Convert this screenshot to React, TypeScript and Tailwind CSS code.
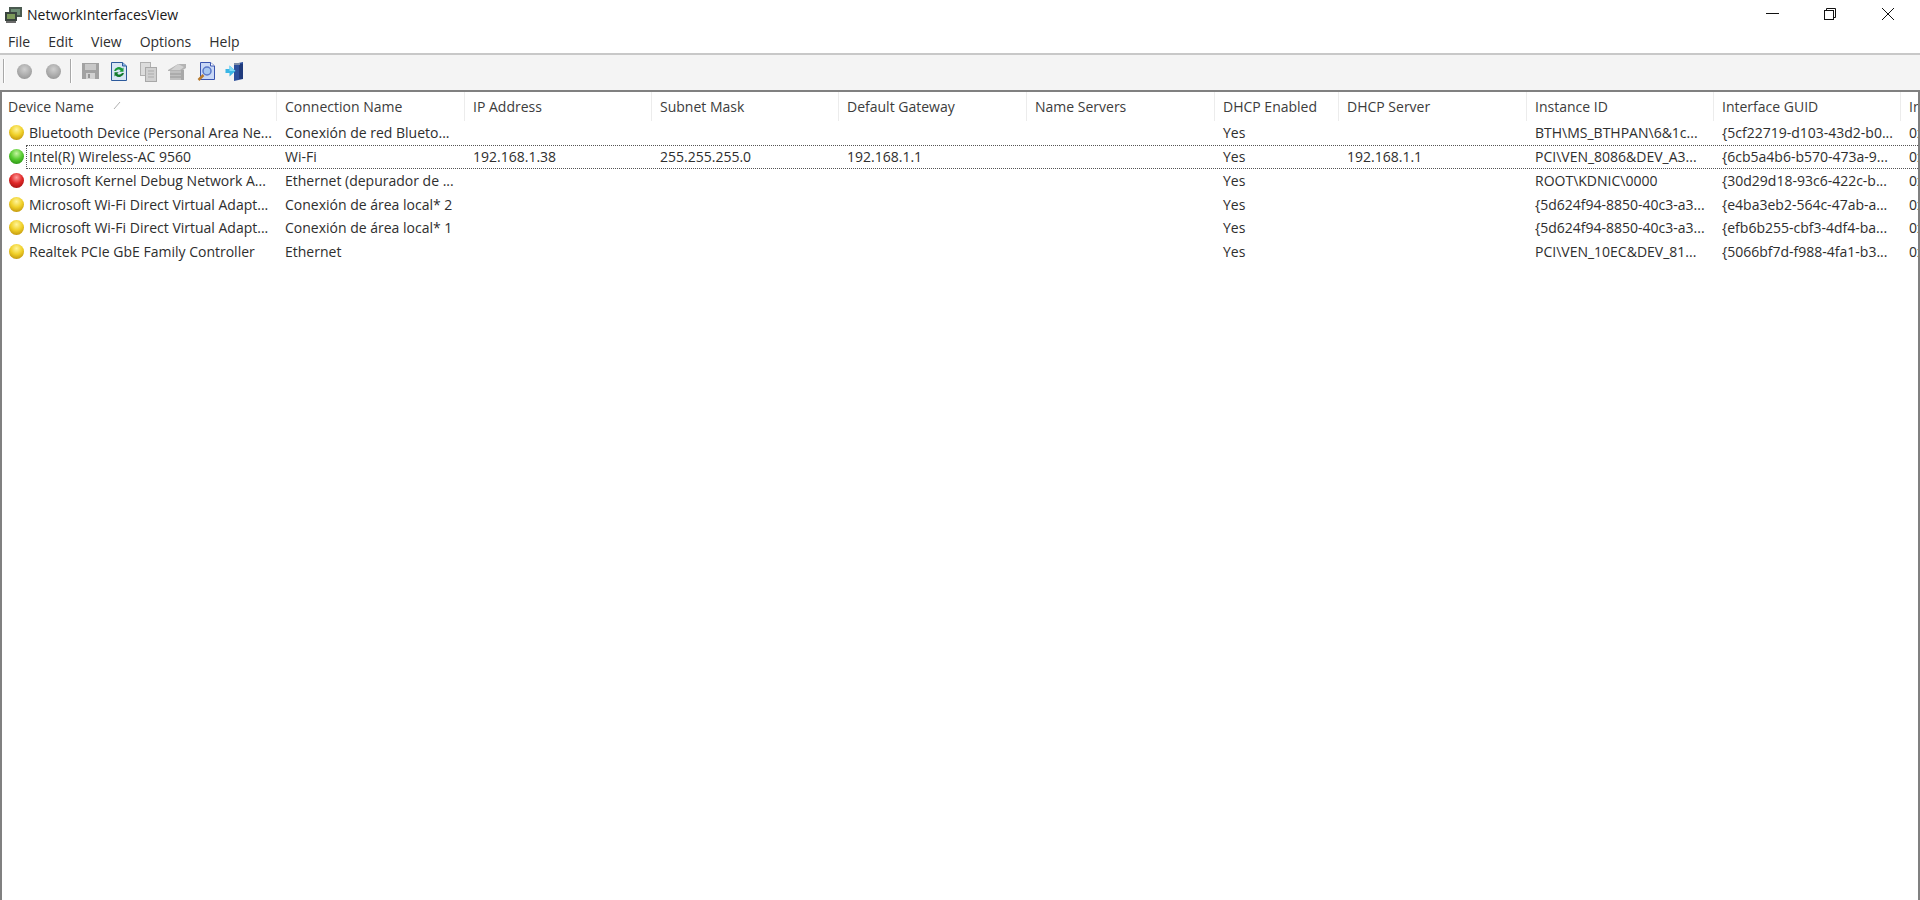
import React from 'react';

const columns = [
    'Device Name',
    'Connection Name',
    'IP Address',
    'Subnet Mask',
    'Default Gateway',
    'Name Servers',
    'DHCP Enabled',
    'DHCP Server',
    'Instance ID',
    'Interface GUID',
    'Interface Index',
];

const widths = 'grid grid-cols-[277px_188px_187px_187px_188px_188px_124px_188px_187px_187px_187px] w-max';

const rows = [
    { status: 'yellow', cells: ['Bluetooth Device (Personal Area Ne...', 'Conexión de red Blueto...', '', '', '', '', 'Yes', '', 'BTH\\MS_BTHPAN\\6&1c...', '{5cf22719-d103-43d2-b0...', '0x00'] },
    { status: 'green', cells: ['Intel(R) Wireless-AC 9560', 'Wi-Fi', '192.168.1.38', '255.255.255.0', '192.168.1.1', '', 'Yes', '192.168.1.1', 'PCI\\VEN_8086&DEV_A3...', '{6cb5a4b6-b570-473a-9...', '0x00'] },
    { status: 'red', cells: ['Microsoft Kernel Debug Network A...', 'Ethernet (depurador de ...', '', '', '', '', 'Yes', '', 'ROOT\\KDNIC\\0000', '{30d29d18-93c6-422c-b...', '0x00'] },
    { status: 'yellow', cells: ['Microsoft Wi-Fi Direct Virtual Adapt...', 'Conexión de área local* 2', '', '', '', '', 'Yes', '', '{5d624f94-8850-40c3-a3...', '{e4ba3eb2-564c-47ab-a...', '0x00'] },
    { status: 'yellow', cells: ['Microsoft Wi-Fi Direct Virtual Adapt...', 'Conexión de área local* 1', '', '', '', '', 'Yes', '', '{5d624f94-8850-40c3-a3...', '{efb6b255-cbf3-4df4-ba...', '0x00'] },
    { status: 'yellow', cells: ['Realtek PCIe GbE Family Controller', 'Ethernet', '', '', '', '', 'Yes', '', 'PCI\\VEN_10EC&DEV_81...', '{5066bf7d-f988-4fa1-b3...', '0x00'] },
];

const ballColors: Record<string, string> = {
    yellow: 'bg-[radial-gradient(circle_at_50%_30%,#fff59a_0%,#f0d028_45%,#c69c10_80%,#7c6a10_100%)]',
    green: 'bg-[radial-gradient(circle_at_50%_30%,#c4f5a0_0%,#58cc30_45%,#2f9a18_80%,#2c6c20_100%)]',
    red: 'bg-[radial-gradient(circle_at_50%_30%,#ff9c9c_0%,#e02828_45%,#ac1414_80%,#701414_100%)]',
};

const GrayBall = () => (
    <div className="w-[15px] h-[15px] rounded-full bg-[radial-gradient(circle_at_50%_35%,#cfcfcf_0%,#a6a6a6_60%,#8a8a8a_100%)]" />
);

const AppIcon = () => (
    <svg width="20" height="20" viewBox="0 0 20 20">
        <rect x="6" y="1" width="13" height="10" fill="#4a5a50" />
        <rect x="8" y="3" width="9" height="6" fill="#6f8f76" />
        <rect x="2" y="6" width="12" height="9" fill="#39443e" />
        <rect x="4" y="8" width="8" height="5" fill="#7c9a5a" />
        <rect x="3" y="15" width="10" height="2" fill="#6b6b6b" />
    </svg>
);

const SaveIcon = () => (
    <svg width="19" height="18" viewBox="0 0 19 18">
        <rect x="1" y="1" width="17" height="16" fill="#a2a2a2" />
        <rect x="4" y="2" width="11" height="6" fill="#c8c8c8" />
        <rect x="5" y="11" width="9" height="6" fill="#d2d2d2" />
        <rect x="7" y="12" width="2" height="4" fill="#969696" />
    </svg>
);

const RefreshIcon = () => (
    <svg width="18" height="21" viewBox="0 0 18 21">
        <path d="M1.5 1.5H12.5L16.5 5V19.5H1.5Z" fill="#d8e6f4" stroke="#2c5a9c" />
        <path d="M12.5 1.5V5H16.5" fill="#8fb8e4" stroke="#2c5a9c" />
        <path d="M4 10a5 5 0 0 1 8.5-2.5l1-1v4.2H9.3l1.4-1.4A3 3 0 0 0 6 10Z" fill="#1a9a3a" />
        <path d="M14 12a5 5 0 0 1-8.5 2.5l-1 1v-4.2h4.2l-1.4 1.4A3 3 0 0 0 12 12Z" fill="#127a2c" />
    </svg>
);

const CopyIcon = () => (
    <svg width="19" height="21" viewBox="0 0 19 21">
        <rect x="1.5" y="1.5" width="10" height="13" fill="#dcdcdc" stroke="#b0b0b0" />
        <rect x="6.5" y="6.5" width="11" height="14" fill="#d0d0d0" stroke="#a8a8a8" />
        <path d="M9 10h6M9 13h6M9 16h6" stroke="#ababab" />
    </svg>
);

const PropertiesIcon = () => (
    <svg width="21" height="19" viewBox="0 0 21 19">
        <path d="M1 8L11 2h8v4l-3 2v1H1Z" fill="#b4b4b4" />
        <path d="M11 2l6 3-4 3H4Z" fill="#d2d2d2" />
        <rect x="3" y="9" width="11" height="9" fill="#c0c0c0" />
        <path d="M3 12h11M3 15h11" stroke="#989898" />
        <rect x="14" y="8" width="3" height="10" fill="#a8a8a8" />
    </svg>
);

const ReportIcon = () => (
    <svg width="19" height="21" viewBox="0 0 19 21">
        <path d="M3.5 1.5H13.5L17.5 5V18.5H3.5Z" fill="#c9d8f6" stroke="#3a55b0" />
        <path d="M13.5 1.5V5H17.5" fill="#ffffff" stroke="#3a55b0" />
        <circle cx="10" cy="10" r="4" fill="#a9c8f0" stroke="#5a78c8" strokeWidth="1.5" />
        <path d="M6.5 14L1.5 19" stroke="#b87a2c" strokeWidth="2.5" />
    </svg>
);

const ExitIcon = () => (
    <svg width="20" height="21" viewBox="0 0 20 21">
        <path d="M9 3L18 1V18L9 20Z" fill="#2c4f9c" />
        <path d="M14 3h4v15h-4Z" fill="#1f3a7c" />
        <path d="M9 2h6v2H9Z" fill="#7c8ca8" />
        <path d="M0.5 8h4V4.5L10.5 10 4.5 15.5V12h-4Z" fill="#39b6e6" />
        <path d="M4.5 4.5L10.5 10H4.5Z" fill="#82dcf6" />
    </svg>
);

const ToolbarSep = () => <div className="w-[2px] h-[24px] bg-[#a8a8a8] border-r border-white" />;

const ToolSlot = ({ children }: { children: React.ReactNode }) => (
    <div className="w-[29px] flex items-center justify-center">{children}</div>
);

const App = () => {
    return (
        <div className="h-[900px] w-[1920px] bg-white flex flex-col overflow-hidden font-['Open_Sans','Noto_Sans',sans-serif] text-[14px] text-[#2e2e2e]">
            {/* Title bar */}
            <div className="h-[30px] flex items-center bg-white">
                <div className="w-[27px] pl-[3px] pt-[2px]">
                    <AppIcon />
                </div>
                <span className="text-[14px] text-[#1a1a1a] pb-[2px]">NetworkInterfacesView</span>
                <div className="ml-auto flex items-center text-black pr-[3px] pb-[2px]">
                    <div className="w-[58px] h-[28px] flex items-center justify-center">
                        <svg width="13" height="12" viewBox="0 0 13 12"><path d="M0 5.5H13" stroke="#111" /></svg>
                    </div>
                    <div className="w-[58px] h-[28px] flex items-center justify-center">
                        <svg width="12" height="12" viewBox="0 0 12 12" fill="none" stroke="#111"><rect x="0.5" y="2.5" width="9" height="9" /><path d="M2.5 2.5V0.5H11.5V9.5H9.5" /></svg>
                    </div>
                    <div className="w-[58px] h-[28px] flex items-center justify-center">
                        <svg width="14" height="14" viewBox="0 0 14 14" stroke="#111"><path d="M1 1L13 13M13 1L1 13" /></svg>
                    </div>
                </div>
            </div>

            {/* Menu */}
            <div className="h-[23px] flex items-center pl-[8px] gap-[18px] bg-white text-[14px]">
                <span>File</span>
                <span>Edit</span>
                <span>View</span>
                <span>Options</span>
                <span>Help</span>
            </div>

            {/* Toolbar */}
            <div className="h-[37px] flex items-center bg-[#f4f4f4] border-t-2 border-[#c8c8c8] pl-[3px] pb-[3px]">
                <ToolbarSep />
                <div className="ml-[4.5px] flex">
                    <ToolSlot><GrayBall /></ToolSlot>
                    <ToolSlot><GrayBall /></ToolSlot>
                </div>
                <div className="ml-[2.5px]"><ToolbarSep /></div>
                <div className="ml-[3.5px] flex">
                    <ToolSlot><SaveIcon /></ToolSlot>
                    <ToolSlot><RefreshIcon /></ToolSlot>
                    <ToolSlot><CopyIcon /></ToolSlot>
                    <ToolSlot><PropertiesIcon /></ToolSlot>
                    <ToolSlot><ReportIcon /></ToolSlot>
                    <ToolSlot><ExitIcon /></ToolSlot>
                </div>
            </div>

            {/* List */}
            <div className="flex-1 border-t-2 border-l-2 border-r-2 border-[#808080] bg-white overflow-hidden">
                <div className={`${widths} h-[29px] items-center -ml-[2px]`}>
                    {columns.map((col, i) => (
                        <div key={col} className="relative h-full flex items-center pl-[8px] text-[#3c3c3c] whitespace-nowrap border-r border-[#ececec]">
                            {col}
                            {i === 0 && (
                                <svg className="absolute left-[113px] top-[9px]" width="9" height="9" viewBox="0 0 9 9">
                                    <path d="M1 8L7 1" stroke="#b0b0b0" />
                                </svg>
                            )}
                        </div>
                    ))}
                </div>
                {rows.map((row) => (
                    <div key={row.cells[0] + row.cells[1]} className={`${widths} relative h-[23.75px] items-center -ml-[2px]`}>
                        {row.cells.map((cell, i) => (
                            <div key={i} className={`h-full flex items-center whitespace-nowrap overflow-hidden ${i === 0 ? 'pl-[9px]' : 'pl-[8px]'}`}>
                                {i === 0 && (
                                    <div className={`w-[15px] h-[15px] rounded-full mr-[5px] ${ballColors[row.status]}`} />
                                )}
                                {cell}
                            </div>
                        ))}
                        {row.status === 'green' && (
                            <div className="absolute left-[26px] right-0 top-0 bottom-0 border border-dotted border-[#555555] pointer-events-none" />
                        )}
                    </div>
                ))}
            </div>
        </div>
    );
};

export default App;
